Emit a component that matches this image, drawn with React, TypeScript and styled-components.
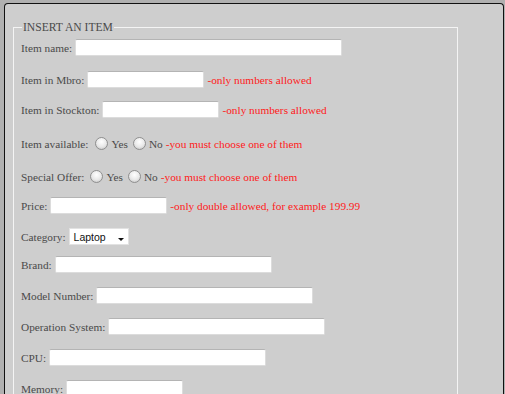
import styled, { createGlobalStyle } from "styled-components";

const GlobalStyle = createGlobalStyle`
  body {
    margin: 0;
    background-color: #b0b0b0;
  }
`;

const serif = `"Liberation Serif", "Times New Roman", Times, serif`;

const Panel = styled.div`
  margin: 3px 0 0 4px;
  width: 490px;
  min-height: 420px;
  background-color: #cecece;
  border: 1px solid #111;
  border-bottom: none;
  border-radius: 4px 4px 0 0;
  padding: 17px 0 0 8px;
  font-family: ${serif};
`;

const Fieldset = styled.fieldset`
  width: 436px;
  margin: 0;
  padding: 2px 0 20px 7px;
  border: 1px solid #f4f4f4;
  border-bottom: none;
`;

const Legend = styled.legend`
  padding: 0 1px;
  margin-left: 1px;
  font-family: ${serif};
  font-size: 11.6px;
  color: #4a4a4a;
`;

const Form = styled.div`
  display: flex;
  flex-direction: column;
`;

const Row = styled.div<{ $mt: number }>`
  display: flex;
  align-items: center;
  gap: 3px;
  height: 17px;
  margin-top: ${(props) => props.$mt}px;
  font-family: ${serif};
  font-size: 11.3px;
  color: #4a4a4a;
  white-space: nowrap;
`;

const Label = styled.span``;

const TextInput = styled.input<{ $w: number }>`
  box-sizing: border-box;
  width: ${(props) => props.$w}px;
  height: 17px;
  margin: 0;
  padding: 0 3px;
  background: #fff;
  border: 1px solid #dcdcdc;
  border-top-color: #b4b4b4;
  border-radius: 2px;
  outline: none;
`;

const Hint = styled.span`
  font-family: ${serif};
  color: #ff1a1a;
`;

const RadioOption = styled.label<{ $ml: number }>`
  display: inline-flex;
  align-items: center;
  gap: 3px;
  margin-left: ${(props) => props.$ml}px;
`;

const RadioDot = styled.span`
  display: inline-block;
  width: 11px;
  height: 11px;
  border-radius: 50%;
  border: 1px solid #8f8f8f;
  background: radial-gradient(circle at 50% 35%, #ffffff 0%, #e8e8e8 55%, #bdbdbd 100%);
`;

const SelectBox = styled.div`
  position: relative;
  display: inline-flex;
  align-items: center;
  box-sizing: border-box;
  width: 60px;
  height: 17px;
  background: #fff;
  border: 1px solid #e2e2e2;
  padding-left: 4px;
  font-family: "Liberation Sans", Arial, sans-serif;
  font-size: 10.5px;
  color: #111;
`;

const Arrow = styled.span`
  position: absolute;
  right: 4px;
  top: 9px;
  width: 0;
  height: 0;
  border-left: 3.5px solid transparent;
  border-right: 3.5px solid transparent;
  border-top: 3px solid #111;
`;

function Radio({ text, ml }: { text: string; ml: number }) {
  return (
    <RadioOption $ml={ml}>
      <RadioDot />
      {text}
    </RadioOption>
  );
}

export default function App() {
  return (
    <>
      <GlobalStyle />
      <Panel>
        <Fieldset>
          <Legend>INSERT AN ITEM</Legend>
          <Form>
            <Row $mt={3}>
              <Label>Item name:</Label>
              <TextInput $w={267} />
            </Row>
            <Row $mt={15}>
              <Label>Item in Mbro:</Label>
              <TextInput $w={117} />
              <Hint>-only numbers allowed</Hint>
            </Row>
            <Row $mt={13}>
              <Label>Item in Stockton:</Label>
              <TextInput $w={117} />
              <Hint>-only numbers allowed</Hint>
            </Row>
            <Row $mt={17}>
              <Label>Item available:</Label>
              <Radio text="Yes" ml={4} />
              <Radio text="No" ml={2} />
              <Hint>-you must choose one of them</Hint>
            </Row>
            <Row $mt={16}>
              <Label>Special Offer:</Label>
              <Radio text="Yes" ml={3} />
              <Radio text="No" ml={2} />
              <Hint>-you must choose one of them</Hint>
            </Row>
            <Row $mt={12}>
              <Label>Price:</Label>
              <TextInput $w={117} />
              <Hint>-only double allowed, for example 199.99</Hint>
            </Row>
            <Row $mt={14}>
              <Label>Category:</Label>
              <SelectBox>
                Laptop
                <Arrow />
              </SelectBox>
            </Row>
            <Row $mt={11}>
              <Label>Brand:</Label>
              <TextInput $w={217} />
            </Row>
            <Row $mt={14}>
              <Label>Model Number:</Label>
              <TextInput $w={217} />
            </Row>
            <Row $mt={14}>
              <Label>Operation System:</Label>
              <TextInput $w={217} />
            </Row>
            <Row $mt={14}>
              <Label>CPU:</Label>
              <TextInput $w={217} />
            </Row>
            <Row $mt={14}>
              <Label>Memory:</Label>
              <TextInput $w={117} />
            </Row>
          </Form>
        </Fieldset>
      </Panel>
    </>
  );
}
